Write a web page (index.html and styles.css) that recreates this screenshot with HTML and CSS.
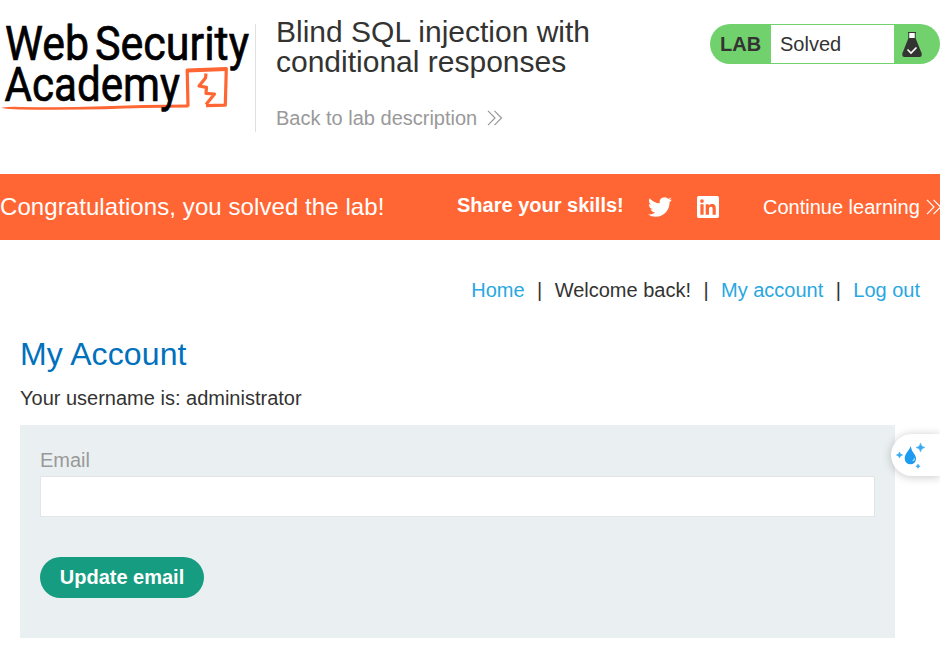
FILE: index.html
```html
<!DOCTYPE html>
<html lang="en">
<head>
<meta charset="utf-8">
<title>Blind SQL injection with conditional responses</title>
<link rel="stylesheet" href="styles.css">
</head>
<body>
<header class="lab-header">
  <svg class="logo" width="255" height="132" viewBox="0 0 255 132" role="img" aria-label="Web Security Academy">
    <g class="logo-mark">
      <path class="underline" d="M1 107.8 Q8 106.5 20 106.9 Q65 107.6 95 106.6 Q145 104.7 188 104.6 L188.5 107.4 Q140 107.4 105 109.2 Q65 110 20 109.5 Q8 109.3 1 107.8Z"/>
      <path d="M188 106.5 L187.2 70 L226.3 68.5 L225.3 105.2 L206 105.7"/>
      <path d="M187 71 L226.5 69.3"/>
      <path d="M206 73.5 L205.5 78 L199 86 L206.5 87.3 L206 93.3 L214.5 94 L206 104.5" stroke-width="3"/>
    </g>
    <g class="logo-text">
      <text x="5" y="60" textLength="84" lengthAdjust="spacingAndGlyphs">Web</text>
      <text x="95" y="60" textLength="154" lengthAdjust="spacingAndGlyphs">Security</text>
      <text x="4.5" y="101" textLength="175.5" lengthAdjust="spacingAndGlyphs">Academy</text>
    </g>
  </svg>
  <div class="title">
    <h2>Blind SQL injection with conditional responses</h2>
    <a class="back" href="#">Back to lab description
      <svg width="16" height="16" viewBox="0 0 16 16"><path d="M1 .8 8 8 1 15.2M7.5 .8 14.5 8 7.5 15.2"/></svg>
    </a>
  </div>
  <div class="status">
    <span class="lab">LAB</span>
    <span class="state">Solved</span>
    <svg class="flask" width="20" height="26" viewBox="0 0 20 26">
      <path d="M6 1.5H14M6.8 1.5V7.5M13.2 1.5V7.5" stroke="#333332" stroke-width="1"/>
      <path d="M7.4 2H12.6V7H7.4Z" fill="#fff"/>
      <path d="M6.5 7H13.5L19.5 22Q20.5 26 17.5 26H2.5Q-.5 26 .5 22Z" fill="#333332"/>
      <path d="M5.5 18.5 9 22 14.5 16.5" fill="none" stroke="#fff" stroke-width="1.6"/>
    </svg>
  </div>
</header>
<section class="banner">
  <h4>Congratulations, you solved the lab!</h4>
  <span class="share">Share your skills!</span>
  <svg class="twitter" width="24" height="24" viewBox="0 0 24 24"><path d="M23.95 4.57a10 10 0 0 1-2.82.77 4.96 4.96 0 0 0 2.16-2.72c-.95.55-2 .95-3.13 1.18a4.92 4.92 0 0 0-8.38 4.48C7.69 8.1 4.07 6.13 1.64 3.16a4.8 4.8 0 0 0-.67 2.48c0 1.71.87 3.21 2.19 4.1a4.9 4.9 0 0 1-2.23-.62v.06a4.92 4.92 0 0 0 3.95 4.83 5 5 0 0 1-2.21.08 4.94 4.94 0 0 0 4.6 3.42A9.87 9.87 0 0 1 0 19.54a13.99 13.99 0 0 0 7.56 2.21c9.05 0 14-7.5 14-13.98 0-.21 0-.42-.02-.63a9.94 9.94 0 0 0 2.41-2.57z"/></svg>
  <svg class="linkedin" width="22" height="22" viewBox="0 0 22 22"><path fill-rule="evenodd" d="M1.8 0H20.2Q22 0 22 1.8V20.2Q22 22 20.2 22H1.8Q0 22 0 20.2V1.8Q0 0 1.8 0ZM3.4 8.3H6.6V18.7H3.4ZM5 3.2A1.85 1.85 0 1 0 5 6.9 1.85 1.85 0 1 0 5 3.2ZM8.7 8.3H11.8V9.7C12.4 8.7 13.5 8 15 8 18 8 18.8 10 18.8 12.8V18.7H15.6V13.4C15.6 12 15.5 10.8 13.9 10.8S12 12.1 12 13.4V18.7H8.7Z"/></svg>
  <a class="continue" href="#">Continue learning
    <svg width="16" height="16" viewBox="0 0 16 16"><path d="M1 .8 8 8 1 15.2M7.5 .8 14.5 8 7.5 15.2"/></svg>
  </a>
</section>
<main>
  <nav>
    <a href="#">Home</a><i>|</i><span>Welcome back!</span><i>|</i><a href="#">My account</a><i>|</i><a href="#">Log out</a>
  </nav>
  <h1>My Account</h1>
  <p class="username">Your username is: administrator</p>
  <form>
    <label for="email">Email</label>
    <input id="email" type="email">
    <button type="button">Update email</button>
  </form>
</main>
<aside class="drop-widget">
  <svg width="30" height="30" viewBox="0 0 30 30">
    <path d="M15.8 6C14.5 10 9.7 13.5 9.7 18.6A5.7 5.7 0 0 0 21.1 18.6C21.1 14.5 16.5 12.5 15.8 6Z" fill="#1d9bf0"/>
    <path d="M17.3 20.5Q19 20 19.2 17.5Q20.5 20.5 18 21Z" fill="#fff"/>
    <path d="M25.5 3Q26 7 30 7.5Q26 8 25.5 12Q25 8 21 7.5Q25 7 25.5 3ZM4.5 12Q4.9 14.7 7.7 15Q4.9 15.3 4.5 18Q4.1 15.3 1.3 15Q4.1 14.7 4.5 12ZM23 24Q23.3 25.9 25.2 26.2Q23.3 26.5 23 28.4Q22.7 26.5 20.8 26.2Q22.7 25.9 23 24Z" fill="#36a9f2" stroke="#36a9f2" stroke-width=".5"/>
  </svg>
</aside>
</body>
</html>
```
FILE: styles.css
```css
* { box-sizing: border-box; }
body {
  margin: 0;
  width: 940px;
  height: 656px;
  overflow: hidden;
  background: #fff;
  color: #333332;
  font: 20px/24px "Liberation Sans", Arial, sans-serif;
}
a { text-decoration: none; }
h1, h2, h4, p { margin: 0; font-weight: 400; }
svg { flex: none; }
.lab-header { display: flex; align-items: flex-start; height: 174px; }
.logo-mark path { fill: none; stroke: #ff6633; stroke-width: 3.2; stroke-linejoin: round; }
.logo-mark .underline { fill: #ff6633; stroke: none; }
.logo-text { font: 400 48px Roboto, sans-serif; fill: #000; stroke: #000; stroke-width: .7; }
.title { width: 375px; padding-left: 20px; margin-top: 24px; height: 108px; border-left: 1px solid #e0e0e0; }
.title h2 { margin-top: -7px; font-size: 30px; line-height: 30px; }
.back { display: flex; align-items: center; gap: 10px; margin-top: 29px; color: #999; }
.back svg, .continue svg { fill: none; stroke: currentColor; stroke-width: 1.2; }
.status { display: flex; align-items: center; width: 230px; height: 40px; margin: 24px 0 0 80px; border-radius: 20px; background: #70d16d; }
.lab { width: 61px; padding-left: 10px; font-weight: 700; }
.state { width: 123px; height: 38px; padding-left: 9px; line-height: 38px; background: #fff; }
.flask { margin-left: 8px; }
.banner { display: flex; align-items: center; height: 66px; overflow: hidden; background: #ff6633; color: #fff; white-space: nowrap; }
.banner h4 { flex: none; width: 457px; font-size: 24px; letter-spacing: .08px; }
.share { flex: none; width: 191px; padding-bottom: 4px; font-weight: 700; }
.twitter, .linkedin { fill: #fff; }
.linkedin { margin-left: 25px; }
.continue { display: flex; flex: none; align-items: center; gap: 6px; margin: -1px 0 0 44px; color: #fff; }
.continue svg { margin-top: 1px; }
main { padding: 38px 20px 0; }
nav { display: flex; justify-content: flex-end; }
nav a { color: #29a7e1; }
nav i { width: 30px; text-align: center; font-style: normal; }
h1 { margin-top: 33px; color: #0071bc; font-size: 32px; line-height: 38px; letter-spacing: .12px; }
.username { margin-top: 13px; }
form { width: 875px; height: 213px; margin-top: 15px; padding: 23px 20px; background: #eaeff2; }
label { display: block; color: #999; }
input { display: block; width: 835px; height: 41px; margin: 4px 0 40px; border: 1px solid #e2e5e7; background: #fff; outline: 0; }
button { display: block; width: 164px; height: 41px; padding: 0 0 2px; border: 0; border-radius: 21px; background: #169c80; color: #fff; font: 700 20px/24px "Liberation Sans", Arial, sans-serif; }
.drop-widget { position: absolute; right: 0; top: 434px; width: 49px; height: 42px; padding: 6px 0 0 4px; border-radius: 21px 0 0 21px; background: #fff; box-shadow: 0 1px 10px rgba(0, 0, 0, .22); }
```
